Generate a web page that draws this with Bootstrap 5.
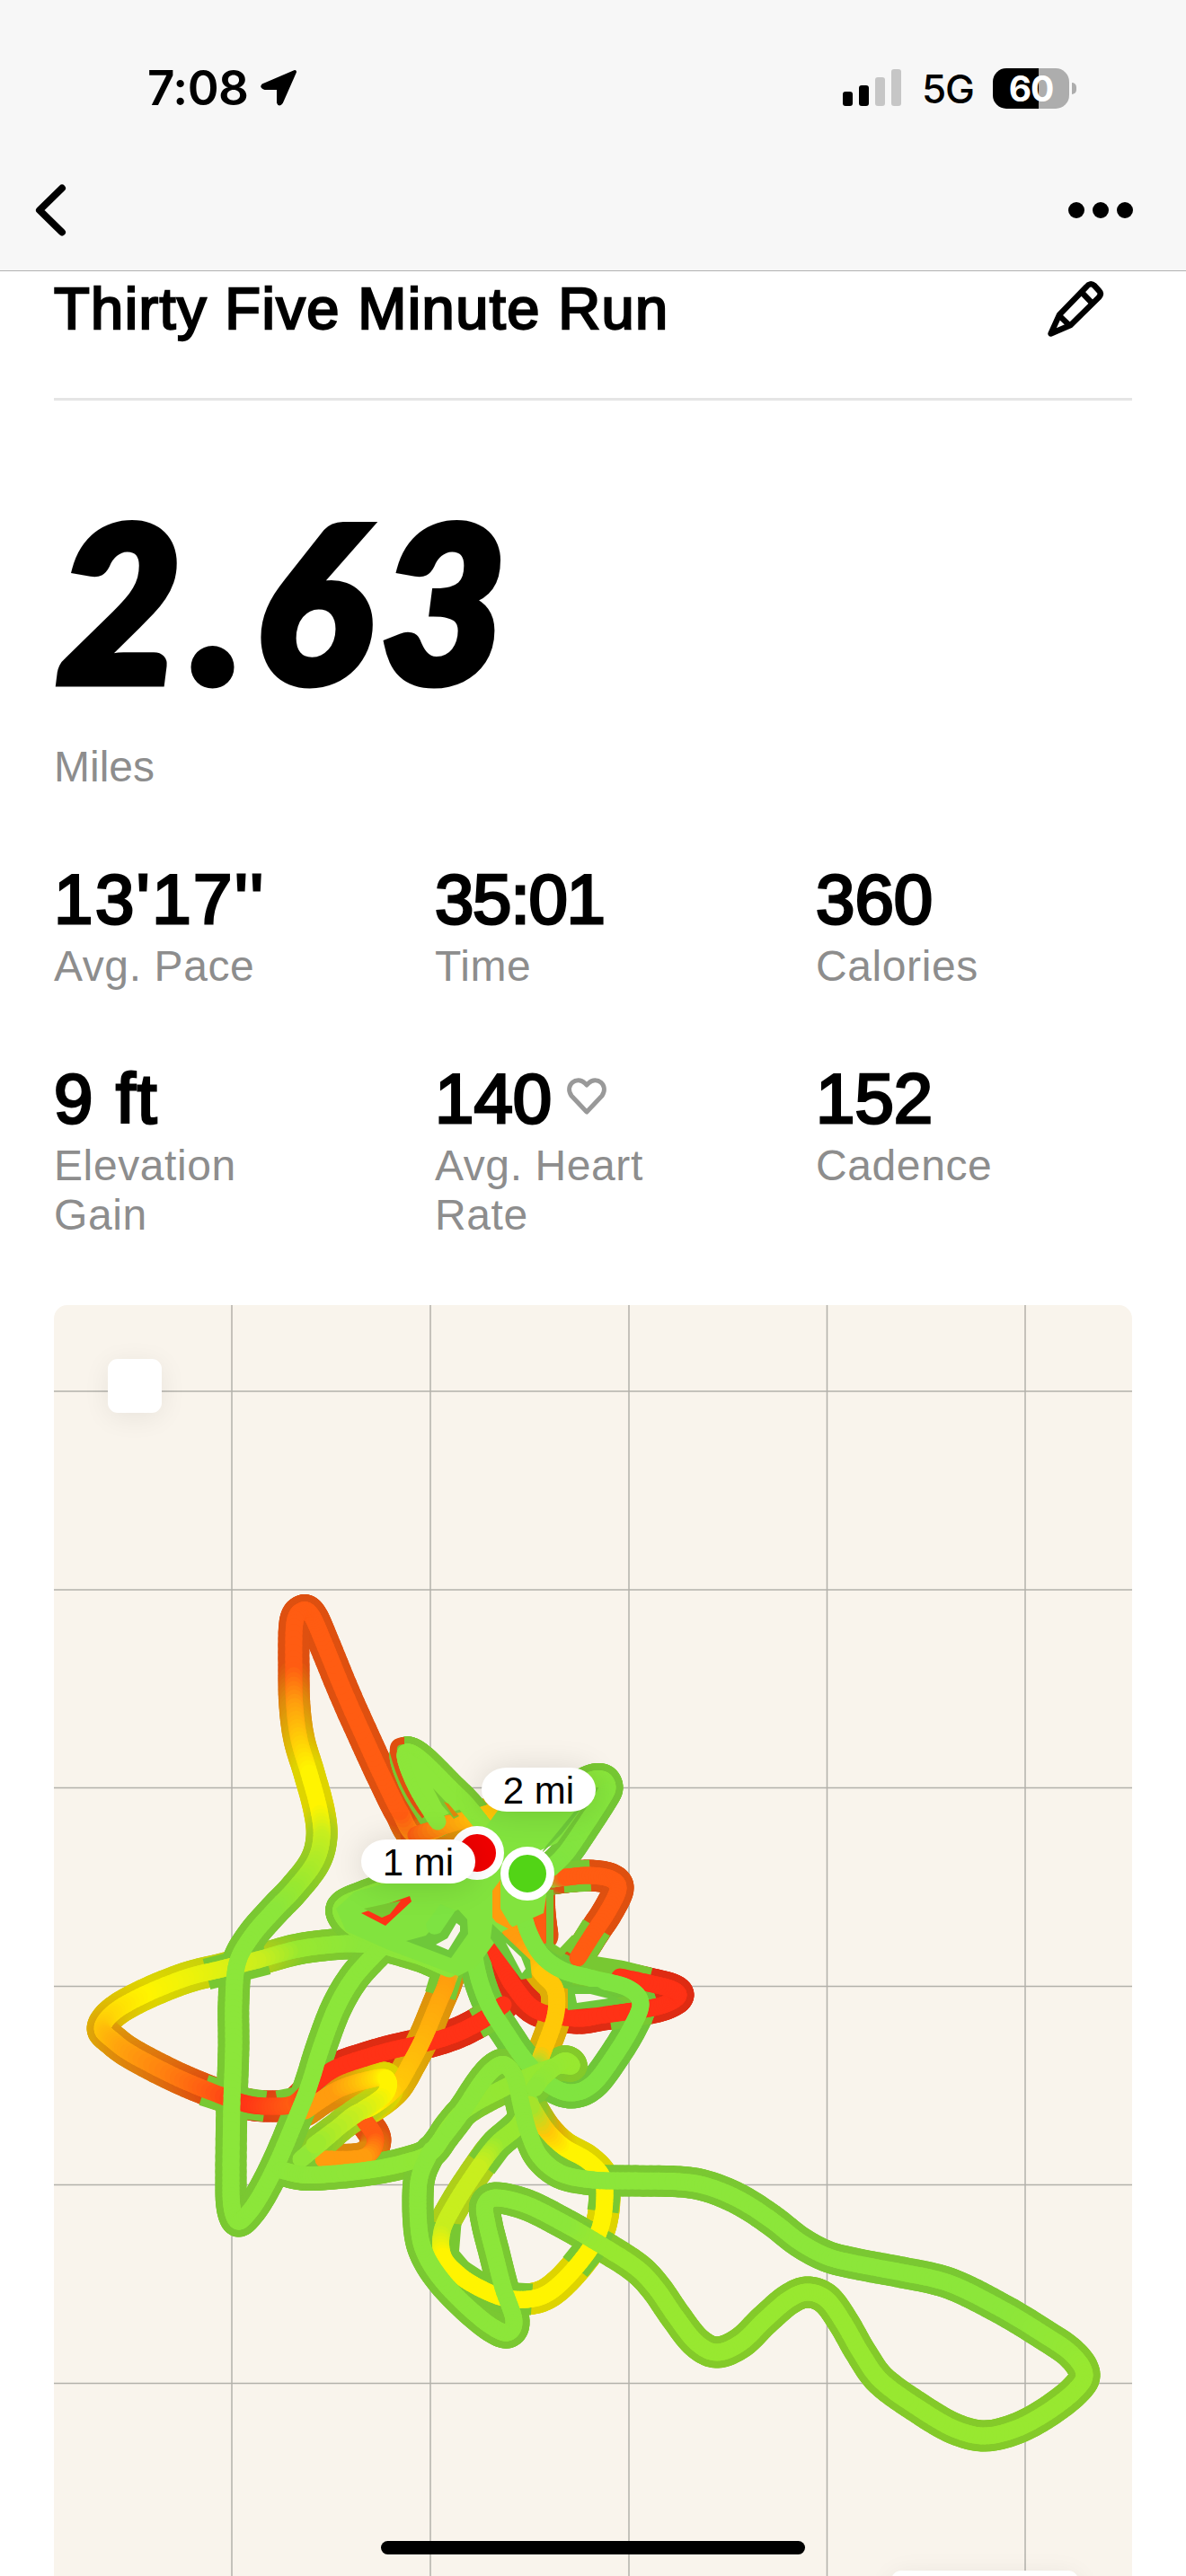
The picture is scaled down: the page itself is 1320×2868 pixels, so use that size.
<!DOCTYPE html>
<html lang="en">
<head>
    <meta charset="UTF-8">
    <meta name="viewport" content="width=device-width, initial-scale=1.0">
    <title>Thirty Five Minute Run</title>
    <link href="https://cdn.jsdelivr.net/npm/bootstrap@5.3.0/dist/css/bootstrap.min.css" rel="stylesheet">
    <style>
        body {
            width: 1320px;
            height: 2868px;
            overflow: hidden;
            color: #000;
            background-color: #fff;
            font-family: "Liberation Sans", Arial, sans-serif;
        }
        svg {
            display: block;
            flex: none;
        }
        .top-bar {
            height: 302px;
            background-color: #f7f7f7;
            border-bottom: 1px solid #b2b2b2;
        }
        .status-bar {
            height: 196px;
            padding: 0 122px 0 164px;
            font-family: Inter, sans-serif;
        }
        .clock {
            font-size: 53px;
            font-weight: 600;
            letter-spacing: -0.5px;
            line-height: 60px;
            margin-right: 12px;
        }
        .network {
            font-size: 44px;
            font-weight: 500;
            letter-spacing: -1px;
            line-height: 60px;
            margin: 2px 21px 0 22px;
        }
        .battery {
            width: 85px;
            height: 45px;
            border-radius: 15px;
            background: linear-gradient(to right, #000 60%, #adadad 60%);
            color: #fff;
            font-size: 39px;
            font-weight: 700;
            letter-spacing: -1px;
            line-height: 45px;
        }
        .battery-nub {
            width: 5px;
            height: 13px;
            margin-left: 3px;
            border-radius: 0 5px 5px 0;
            background-color: #adadad;
        }
        .nav-icons {
            height: 75px;
            padding: 0 58px 0 36px;
        }
        .content {
            padding: 0 60px;
        }
        .title-row {
            height: 144px;
            padding: 7px 28px 0 0;
            border-bottom: 3px solid #e5e5e5;
        }
        .run-title {
            font-size: 65px;
            line-height: 70px;
            letter-spacing: 1.4px;
            -webkit-text-stroke: 2.4px #000;
        }
        .distance {
            margin-top: 96px;
            font-family: Lato, sans-serif;
            font-size: 240px;
            font-style: italic;
            font-weight: 900;
            letter-spacing: 12px;
            line-height: 250px;
            text-indent: 3px;
            -webkit-text-stroke: 9px #000;
        }
        .stat-label {
            color: #8d8d8d;
            font-size: 48px;
            letter-spacing: 0.6px;
            line-height: 55px;
        }
        .distance-label {
            margin-top: 34px;
            letter-spacing: 0;
        }
        .stats {
            display: grid;
            grid-template-columns: 424px 424px 1fr;
            row-gap: 75px;
            margin-top: 75px;
        }
        .stat-value {
            font-size: 78px;
            line-height: 90px;
            margin-bottom: 2px;
            -webkit-text-stroke: 3px #000;
        }
        .stat-pace {
            letter-spacing: 2.5px;
        }
        .stat-time {
            letter-spacing: -1.3px;
        }
        .stat-climb {
            letter-spacing: 2px;
        }
        .stat-narrow {
            width: 260px;
        }
        .run-map {
            height: 1415px;
            margin-top: 73px;
            border-radius: 15px 15px 0 0;
            background-color: #f9f4ec;
        }
        .map-button,
        .map-panel {
            position: absolute;
            background-color: #fff;
            border-radius: 11px;
            box-shadow: 0 5px 30px rgba(0, 0, 0, 0.07);
        }
        .map-button {
            left: 60px;
            top: 60px;
            width: 60px;
            height: 60px;
        }
        .map-panel {
            left: 932px;
            top: 1409px;
            width: 208px;
            height: 60px;
        }
        .mile-pin {
            position: absolute;
            width: 127px;
            height: 49px;
            border-radius: 28px / 24px;
            background-color: #fff;
            box-shadow: 0 2px 36px rgba(0, 0, 0, 0.13);
            font-size: 42px;
            line-height: 51px;
            text-align: center;
        }
        .mile-one {
            left: 342px;
            top: 595px;
        }
        .mile-two {
            left: 476px;
            top: 515px;
        }
        .route-dot {
            position: absolute;
            width: 60px;
            height: 60px;
            border: 9px solid #fff;
            border-radius: 50%;
        }
        .finish-dot {
            left: 441px;
            top: 580px;
            background-color: #f00000;
        }
        .start-dot {
            left: 497px;
            top: 603px;
            background-color: #52d416;
        }
        .home-bar {
            position: absolute;
            left: 424px;
            top: 2829px;
            width: 472px;
            height: 15px;
            border-radius: 8px;
            background-color: #000;
        }
    </style>
</head>
<body class="position-relative">
    <header class="top-bar">
        <div class="status-bar d-flex align-items-center">
            <span class="clock">7:08</span>
            <svg width="44" height="44" viewBox="0 0 44 44">
                <path d="M4 19 39 4 24 38 Q22 41 21 38 V22 H6 Q2 21 4 19Z" fill="#000" stroke="#000" stroke-width="4" stroke-linejoin="round"/>
            </svg>
            <svg class="ms-auto" width="66" height="42" viewBox="0 0 66 42">
                <rect x="0" y="25" width="11" height="16" rx="3"/>
                <rect x="18" y="18" width="11" height="23" rx="3"/>
                <rect x="36" y="9" width="11" height="32" rx="3" fill="#c6c6c6"/>
                <rect x="54" y="0" width="11" height="41" rx="3" fill="#c6c6c6"/>
            </svg>
            <span class="network">5G</span>
            <div class="battery text-center">60</div>
            <div class="battery-nub"></div>
        </div>
        <nav class="nav-icons d-flex justify-content-between align-items-center">
            <svg width="40" height="60" viewBox="0 0 40 60">
                <path d="M33 5.500 8 30 33 54.500" fill="none" stroke="#000" stroke-width="8" stroke-linecap="round" stroke-linejoin="round"/>
            </svg>
            <svg width="74" height="20" viewBox="0 0 74 20">
                <circle cx="10" cy="10" r="9"/>
                <circle cx="37" cy="10" r="9"/>
                <circle cx="64" cy="10" r="9"/>
            </svg>
        </nav>
    </header>

    <main class="content">
        <div class="title-row d-flex justify-content-between align-items-start">
            <h1 class="run-title fw-normal m-0">Thirty Five Minute Run</h1>
            <svg width="70" height="70" viewBox="1160 310 70 70" fill="none" stroke="#000" stroke-width="6.500" stroke-linejoin="round">
                <path d="M1167.500 372.500 1177 351.500 1207 320.500Q1211.500 315 1216 319L1221.500 325Q1224.500 328 1221 332L1189.500 363Z"/>
                <path d="M1202 326.500 1213 338M1177 352.500 1188 363"/>
            </svg>
        </div>

        <div class="distance">2.63</div>
        <div class="stat-label distance-label">Miles</div>

        <section class="stats">
            <div>
                <div class="stat-value stat-pace">13'17''</div>
                <div class="stat-label">Avg. Pace</div>
            </div>
            <div>
                <div class="stat-value stat-time">35:01</div>
                <div class="stat-label">Time</div>
            </div>
            <div>
                <div class="stat-value">360</div>
                <div class="stat-label">Calories</div>
            </div>
            <div>
                <div class="stat-value stat-climb">9 ft</div>
                <div class="stat-label stat-narrow">Elevation Gain</div>
            </div>
            <div>
                <div class="stat-value d-flex align-items-center">140
                    <svg class="ms-3 mb-1" width="46" height="46" viewBox="0 0 46 46">
                        <path d="M23 40 6 22C-2 10 12-1 21 8L23 10 25 8C34-1 48 10 40 22Z" fill="none" stroke="#999" stroke-width="5" stroke-linejoin="round"/>
                    </svg>
                </div>
                <div class="stat-label stat-narrow">Avg. Heart Rate</div>
            </div>
            <div>
                <div class="stat-value">152</div>
                <div class="stat-label">Cadence</div>
            </div>
        </section>

        <section class="run-map position-relative overflow-hidden">
            <svg width="1200" height="1415" viewBox="60 1453 1200 1415">
                <g stroke="#b3b1aa" stroke-width="1.500">
                    <path d="M258 1453V2868M479 1453V2868M700 1453V2868M920.500 1453V2868M1141 1453V2868"/>
                    <path d="M60 1549H1260M60 1770H1260M60 1990.500H1260M60 2211.500H1260M60 2432.500H1260M60 2653.500H1260"/>
                </g>
                <g id="casing" fill="none" stroke-width="35" stroke-linecap="round"></g>
                <!-- places where a crossing tints the casing green -->
                <g fill="none" stroke="#78c832" stroke-width="35" stroke-linejoin="round">
                    <path d="M230 2198 297 2181M227 2327 273 2342 295 2345"/>
                    <path d="M310 2345 335 2340M475 2180 499 2192 490 2222M530 2253 560 2237"/>
                    <path d="M627 2090 657 2088M664 2146 643 2180"/>
                    <path d="M640 2192 690 2200 722 2208M678 2243 723 2236"/>
                    <path d="M577 2366 553 2387 536 2410M496 2475 493 2512 510 2532 533 2547 560 2558 592 2560"/>
                    <path d="M640 2524 657 2503 667 2480M671 2462 673 2447 670 2423"/>
                </g>
                <path d="M450 1938Q436 1938 438 1951C444 1975 455 2000 473 2022" fill="none" stroke="#e04e10" stroke-width="8"/>
                <g id="core" fill="none" stroke-width="19" stroke-linecap="round"></g>
                <g id="tangle">
                    <path d="M452 1950 470 1960 520 2011 488 2024 466 1990Z" fill="#8ce63a"/>
                    <path d="M540 2035 556 2013 650 2010 620 2052 590 2065 613 2080 605 2130 560 2150 530 2190 510 2200 430 2170 385 2150 374 2125 395 2106 455 2090 520 2090Z" fill="#82e33e"/>
                    <path d="M640 2016 608 2055 602 2064 625 2042 648 2012Z" fill="#6ec83a"/>
                    <path d="M482 1991 497 2007 511 2022 505 2025 492 2010Z" fill="#78c832"/>
                    <path d="M494 2006 499 2008 510 2021 505 2023Z" fill="#e0850c"/>
                    <path d="M402 2130 456 2111 458 2117 429 2144Z" fill="#ff3216"/>
                    <path d="M405 2125 446 2116 434 2131 425 2135Z" fill="#78c832"/>
                    <path d="M452 2161 474 2155 492 2135 510 2126 520 2137 521 2153 502 2180Z" fill="#6ec83a"/>
                    <path d="M485 2165 498 2158 508 2141 512 2144 512 2150 499 2171Z" fill="#f9f4ec"/>
                    <path d="M474 2142Q476 2158 490 2152L507 2127 490 2120Z" fill="#7de342"/>
                    <path d="M548 2105 557 2093 557 2125 567 2142 580 2155 552 2140 548 2135Z" fill="#ff9c0e"/>
                    <path d="M548 2142 590 2182 592 2202 580 2204 546 2158Z" fill="#6ec83a"/>
                    <path d="M563 2163 580 2179 585 2192 581 2197Z" fill="#f9f4ec"/>
                    <path d="M632 2212 665 2212 696 2230 665 2235 632 2238Z" fill="#6ec83a"/>
                    <path d="M640 2220 657 2220 677 2225 642 2230Z" fill="#f9f4ec"/>
                    <path d="M612 2104V2166L624 2174 640 2157" fill="none" stroke="#78c832" stroke-width="8"/>
                </g>
            </svg>

            <div class="map-button"></div>
            <div class="route-dot finish-dot"></div>
            <div class="route-dot start-dot"></div>
            <div class="mile-pin mile-one">1 mi</div>
            <div class="mile-pin mile-two">2 mi</div>
            <div class="map-panel"></div>
        </section>
    </main>
    <div class="home-bar"></div>

    <script src="https://cdn.jsdelivr.net/npm/bootstrap@5.3.0/dist/js/bootstrap.bundle.min.js"></script>
    <script>
        // Pace colours, slow to fast
        const pace = {
            r: [255, 50, 22],
            f: [255, 92, 18],
            o: [255, 156, 14],
            a: [255, 200, 8],
            y: [255, 244, 0],
            l: [200, 238, 30],
            h: [152, 232, 48],
            g: [140, 230, 58],
            b: [128, 228, 64]
        };

        // Each leg is a list of "x y" points; a letter sets the pace at that point
        const legs = [
            // red stretch east of the start
            '547 2130 r,549 2163,560 2190,573 2213,597 2238,640 2247,673 2243,723 2236,746 2229,755 2221,746 2214,722 2208,690 2201 r',
            // west loop
            '430 2167 g,393 2164 g,360 2166,327 2171 h,287 2182 l,247 2192,207 2202,160 2221 y,127 2240,114 2258 a,125 2271,147 2287 o,193 2311,233 2328 f,273 2342 r,300 2345,327 2342 f,350 2320 r,373 2303 r,410 2290,443 2281,480 2273,510 2263,537 2249,560 2232 r',
            // south-west tangle
            '405 2360 f,418 2382 f,405 2402 o,360 2404 o',
            '430 2167 g,473 2180,499 2192 g,497 2208 o,487 2232,472 2268,457 2297,440 2325 a,415 2345 y,393 2355 l,366 2378,335 2404 g',
            '340 2350 o,375 2327 o,408 2316 a,430 2314 y,428 2332 y,395 2355 l,350 2388 h',
            // south loop
            '590 2340 g,577 2366 h,553 2387 h,533 2413 l,507 2453 l,492 2484 l,493 2512 y,510 2532,533 2547,560 2558,587 2560,610 2553,633 2533,657 2503,669 2477,673 2447,670 2423,653 2405,627 2390 y,607 2370 a,590 2343 h',
            // east side
            '600 2105 f,601 2130 f,604 2155 f',
            '615 2092 b,630 2090 f,657 2088,680 2092,688 2103,677 2127,660 2153 f,643 2180 f',
            '553 2107 o,557 2130 o,580 2165 o,603 2197 a,618 2215 a,618 2245 a,604 2285 a,596 2305 g',
            // tall spike and west side
            '500 2030 o,463 2043 o,445 2017 f,428 1983,408 1940,383 1884,360 1828,347 1799,337 1793,328 1807,327 1860 f,328 1900 o,333 1937 a,344 1974 y,355 2015 y,358 2046 l,350 2074,327 2104 h,305 2127 g,280 2156,264 2186,260 2230,260 2281,258 2342,257 2418,258 2456,265 2473,278 2462,293 2439,310 2405,327 2365,343 2325,358 2278,374 2236,393 2203,417 2176,446 2148,473 2120 g',
            '463 2043 f,500 2031 o,540 2020 a,570 2010 a',
            // lobes round the start
            '540 2035 g,520 2010,500 1990,473 1963,458 1952,451 1953,455 1970,467 1996,487 2028 g',
            '590 2030 b,620 2005,653 1984 g,670 1981,676 1990,670 2003,650 2034,630 2063,613 2080 b',
            '560 2085 b,490 2095,440 2100 g,400 2113,382 2122,381 2132,394 2146,425 2160,473 2180,500 2192 g',
            '540 2080 b,527 2147,530 2190,543 2230,563 2263,587 2297,613 2322,637 2330,660 2320,683 2290,703 2257,713 2230,698 2213,660 2203,627 2194,604 2178,590 2155,580 2125,573 2100 b',
            '482 2143 b,500 2115,550 2060 b',
            // long loop to the south east
            '313 2416 g,335 2421,360 2421,410 2416,450 2408,480 2396,500 2368,520 2347,560 2325,593 2310,620 2300,636 2300,627 2295 h,605 2312,595 2325 g',
            '480 2396 g,513 2353,535 2320,550 2303,562 2299,573 2313,581 2347,588 2373,601 2401,625 2420,660 2427,693 2428,756 2429,790 2435,825 2450,859 2472,890 2496,920 2512,951 2520,1004 2530,1043 2538,1073 2549,1119 2573 g,1157 2596,1192 2620,1207 2643 h,1196 2662,1165 2686,1131 2704,1096 2712,1062 2704,1024 2682,981 2651,958 2619,939 2586,920 2560,899 2552,878 2560,851 2583,825 2608,798 2619,775 2608,752 2579,729 2546,706 2523,660 2494 h,627 2475 g,587 2455,553 2447,540 2455,542 2476,550 2508,560 2547,572 2583,565 2597,547 2590,520 2568,493 2540,475 2513,467 2487,465 2447,468 2420,480 2394 g'
        ];

        // Catmull-Rom interpolation on one coordinate
        function spline(a, b, c, d, t) {
            return 0.5 * (2 * b + (c - a) * t + (2 * a - 5 * b + 4 * c - d) * t * t + (3 * b - a - 3 * c + d) * t * t * t);
        }

        function readLeg(text) {
            const points = text.split(',').map(item => {
                const [x, y, key] = item.split(' ');
                return {x: Number(x), y: Number(y), color: key ? pace[key] : null};
            });
            // Blend the colour between the points that name one
            let last = 0;
            points.forEach((point, i) => {
                if (!point.color) return;
                for (let j = last + 1; j < i; j++) {
                    const t = (j - last) / (i - last);
                    points[j].mix = points[last].color.map((v, k) => v + (point.color[k] - v) * t);
                }
                point.mix = point.color;
                last = i;
            });
            return points;
        }

        function drawLeg(points, group, shade) {
            const steps = 8;
            let html = '';
            for (let i = 0; i < points.length - 1; i++) {
                const a = points[Math.max(i - 1, 0)];
                const b = points[i];
                const c = points[i + 1];
                const d = points[Math.min(i + 2, points.length - 1)];
                const at = t => spline(a.x, b.x, c.x, d.x, t).toFixed(1) + ' ' + spline(a.y, b.y, c.y, d.y, t).toFixed(1);
                for (let s = 0; s < steps; s++) {
                    const rgb = b.mix.map((v, k) => Math.round((v + (c.mix[k] - v) * s / steps) * shade));
                    html += `<path d="M${at(s / steps)}L${at((s + 1) / steps)}" stroke="rgb(${rgb})"/>`;
                }
            }
            group.innerHTML += html;
        }

        const routes = legs.map(readLeg);
        routes.forEach(route => drawLeg(route, document.getElementById('casing'), 0.87));
        routes.forEach(route => drawLeg(route, document.getElementById('core'), 1));
    </script>
</body>
</html>
